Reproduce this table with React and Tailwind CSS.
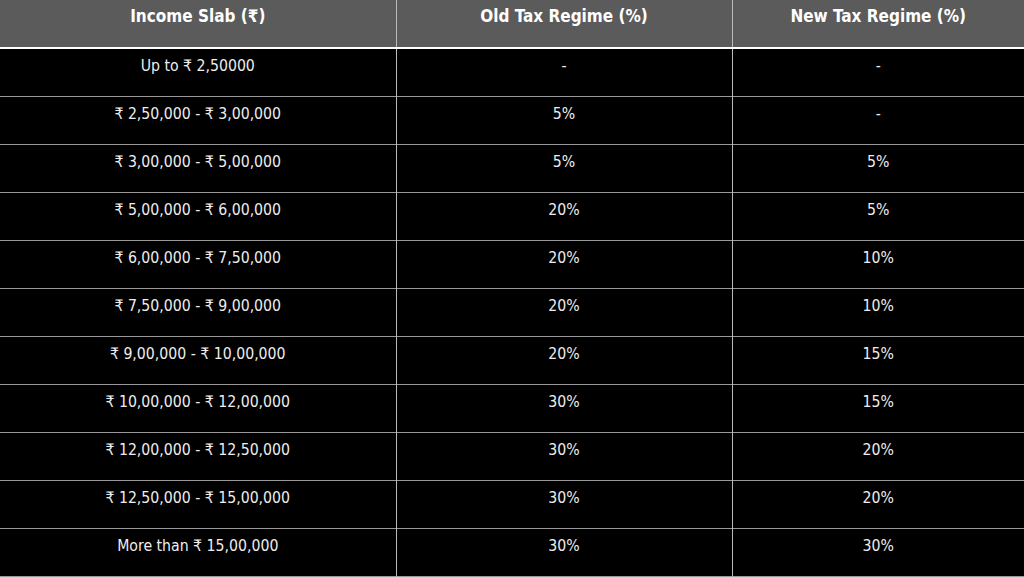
import React from "react";

const rows = [
  ["Up to ₹ 2,50000", "-", "-"],
  ["₹ 2,50,000 - ₹ 3,00,000", "5%", "-"],
  ["₹ 3,00,000 - ₹ 5,00,000", "5%", "5%"],
  ["₹ 5,00,000 - ₹ 6,00,000", "20%", "5%"],
  ["₹ 6,00,000 - ₹ 7,50,000", "20%", "10%"],
  ["₹ 7,50,000 - ₹ 9,00,000", "20%", "10%"],
  ["₹ 9,00,000 - ₹ 10,00,000", "20%", "15%"],
  ["₹ 10,00,000 - ₹ 12,00,000", "30%", "15%"],
  ["₹ 12,00,000 - ₹ 12,50,000", "30%", "20%"],
  ["₹ 12,50,000 - ₹ 15,00,000", "30%", "20%"],
  ["More than ₹ 15,00,000", "30%", "30%"],
];

const App = () => {
  return (
    <div
      className="w-[1024px] h-[577px] bg-black overflow-hidden"
      style={{ fontFamily: '"Liberation Sans Narrow", "DejaVu Sans Condensed", Roboto, sans-serif' }}
    >
      <table className="w-full border-collapse table-fixed text-[15.7px] text-[#eeeeee]">
        <colgroup>
          <col className="w-[396px]" />
          <col className="w-[336px]" />
          <col />
        </colgroup>
        <thead>
          <tr className="h-[48px] bg-[#5b5b5b] border-b-2 border-white">
            <th className="align-top pt-[4px] font-semibold text-white text-[17px] border-r border-[#bbbbbb]">Income Slab (₹)</th>
            <th className="align-top pt-[4px] font-semibold text-white text-[17px] border-r border-[#bbbbbb]">Old Tax Regime (%)</th>
            <th className="align-top pt-[4px] font-semibold text-white text-[17px]">New Tax Regime (%)</th>
          </tr>
        </thead>
        <tbody>
          {rows.map((r, i) => (
            <tr key={i} className="h-[48px] border-b border-[#999999]">
              <td className="align-top pt-[5px] text-center border-r border-[#bbbbbb]">{r[0]}</td>
              <td className="align-top pt-[5px] text-center border-r border-[#bbbbbb]">{r[1]}</td>
              <td className="align-top pt-[5px] text-center">{r[2]}</td>
            </tr>
          ))}
        </tbody>
      </table>
    </div>
  );
};

export default App;
